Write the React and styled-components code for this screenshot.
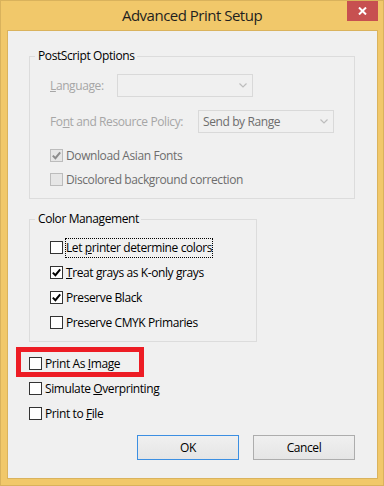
import React from 'react';
import styled, { createGlobalStyle } from 'styled-components';

const GlobalStyle = createGlobalStyle`
  html, body {
    margin: 0;
    padding: 0;
  }
  body {
    font-family: "Open Sans", "Noto Sans", sans-serif;
    font-size: 12px;
    letter-spacing: -0.4px;
    background: #f1c86a;
  }
`;

const Window = styled.div`
  width: 384px;
  height: 486px;
  box-sizing: border-box;
  background: #f1c86a;
  border: 1px solid #d9b25c;
  display: flex;
  flex-direction: column;
`;

const TitleBar = styled.div`
  height: 29px;
  display: grid;
  grid-template-columns: 1fr auto 1fr;
`;

const Title = styled.div`
  grid-column: 2;
  font-size: 15px;
  letter-spacing: -0.5px;
  line-height: 29px;
  color: #1f1f1f;
`;

const CloseButton = styled.div`
  grid-column: 3;
  justify-self: end;
  width: 31px;
  height: 20px;
  margin-right: 5px;
  background: #c75050;
  display: flex;
  align-items: center;
  justify-content: center;
`;

const Client = styled.div`
  flex: 1;
  margin: 0 5px 6px 6px;
  border: 1px solid #dab35d;
  background: #f0f0f0;
  padding: 17px 0 0 21px;
  display: flex;
  flex-direction: column;
  align-items: flex-start;
`;

const Group = styled.fieldset`
  box-sizing: border-box;
  width: ${({ $width }) => $width}px;
  margin: ${({ $top }) => $top || 0}px 0 0 0;
  padding: ${({ $padTop }) => $padTop}px 20px 10px 20px;
  border: 1px solid #dcdcdc;
  min-width: 0;
  display: flex;
  flex-direction: column;
  gap: ${({ $gap }) => $gap}px;
`;

const Legend = styled.legend`
  margin-left: -15px;
  padding: 0 2px 0 3px;
  line-height: 16px;
  color: #000;
`;

const FieldRow = styled.div`
  display: flex;
  align-items: center;
  height: 23px;
  margin-bottom: ${({ $after }) => $after || 0}px;
`;

const FieldLabel = styled.span`
  width: ${({ $width }) => $width}px;
  color: #a6a6a6;
  line-height: 16px;
`;

const Select = styled.div`
  box-sizing: border-box;
  width: 136px;
  height: 23px;
  border: 1px solid #d9d9d9;
  background: #f0f0f0;
  display: flex;
  align-items: center;
  padding: 0 5px 0 4px;
  color: #6d6d6d;
`;

const SelectValue = styled.span`
  flex: 1;
  line-height: 16px;
`;

const CheckRow = styled.div`
  position: relative;
  display: flex;
  align-items: center;
  height: 17px;

  ${({ $highlight }) =>
    $highlight &&
    `
    &::after {
      content: '';
      position: absolute;
      left: -13px;
      top: -8px;
      width: 128px;
      height: 30px;
      box-sizing: border-box;
      border: 5px solid #ed1c24;
    }
  `}
`;

const Box = styled.span`
  box-sizing: border-box;
  width: 13px;
  height: 13px;
  margin-right: 2px;
  border: 1px solid ${({ $disabled }) => ($disabled ? '#bcbcbc' : '#333333')};
  background: ${({ $disabled }) => ($disabled ? '#e6e6e6' : '#ffffff')};
  display: flex;
  align-items: center;
  justify-content: center;
`;

const CheckText = styled.span`
  line-height: 16px;
  padding: 1px 0;
  border: 1px dotted ${({ $focused }) => ($focused ? '#000' : 'transparent')};
  color: ${({ $disabled }) => ($disabled ? '#6d6d6d' : '#000')};
`;

const Key = styled.span`
  text-decoration: underline;
  text-underline-offset: 1px;
`;

const Checks = styled.div`
  margin-top: 13px;
  display: flex;
  flex-direction: column;
  gap: 8px;
`;

const Buttons = styled.div`
  width: 326px;
  margin-top: 13px;
  display: flex;
  justify-content: flex-end;
  gap: 14px;
`;

const Button = styled.div`
  box-sizing: border-box;
  width: 102px;
  height: 25px;
  border: 1px solid ${({ $default }) => ($default ? '#3c8fe2' : '#adadad')};
  background: linear-gradient(#f0f0f0, #e5e5e5);
  display: flex;
  align-items: center;
  justify-content: center;
  color: #000;
  line-height: 16px;
`;

const Chevron = () => (
  <svg width="8" height="5" viewBox="0 0 8 5">
    <polyline points="0.5,0.5 4,4 7.5,0.5" fill="none" stroke="#bdbdbd" strokeWidth="1.2" />
  </svg>
);

const Checkbox = ({ checked, disabled, focused, highlight, children }) => (
  <CheckRow $highlight={highlight}>
    <Box $disabled={disabled}>
      {checked && (
        <svg width="9" height="9" viewBox="0 0 9 9">
          <path
            d="M0.8 4.6 L3.4 7.2 L8.2 1.4"
            fill="none"
            stroke={disabled ? '#8c8c8c' : '#000'}
            strokeWidth="2"
          />
        </svg>
      )}
    </Box>
    <CheckText $disabled={disabled} $focused={focused}>
      {children}
    </CheckText>
  </CheckRow>
);

export default function App() {
  return (
    <>
      <GlobalStyle />
      <Window>
        <TitleBar>
          <Title>Advanced Print Setup</Title>
          <CloseButton>
            <svg width="9" height="8" viewBox="0 0 9 8">
              <path d="M1 0.5 L8 7.5 M8 0.5 L1 7.5" stroke="#fff" strokeWidth="2" />
            </svg>
          </CloseButton>
        </TitleBar>
        <Client>
          <Group $width={326} $padTop={10} $gap={7}>
            <Legend>PostScript Options</Legend>
            <FieldRow $after={6}>
              <FieldLabel $width={67}>
                <Key>L</Key>anguage:
              </FieldLabel>
              <Select>
                <SelectValue />
                <Chevron />
              </Select>
            </FieldRow>
            <FieldRow $after={7}>
              <FieldLabel $width={148}>
                Fo<Key>n</Key>t and Resource Policy:
              </FieldLabel>
              <Select>
                <SelectValue>Send by Range</SelectValue>
                <Chevron />
              </Select>
            </FieldRow>
            <Checkbox checked disabled>Download Asian Fonts</Checkbox>
            <Checkbox disabled>Discolored background correction</Checkbox>
          </Group>

          <Group $width={228} $top={12} $padTop={12} $gap={8}>
            <Legend>Color Management</Legend>
            <Checkbox focused>
              Let <Key>p</Key>rinter determine colors
            </Checkbox>
            <Checkbox checked>
              <Key>T</Key>reat grays as K-only grays
            </Checkbox>
            <Checkbox checked>Preserve Black</Checkbox>
            <Checkbox>Preserve CMYK Primaries</Checkbox>
          </Group>

          <Checks>
            <Checkbox highlight>
              Print As <Key>I</Key>mage
            </Checkbox>
            <Checkbox>
              Simulate <Key>O</Key>verprinting
            </Checkbox>
            <Checkbox>
              Print to <Key>F</Key>ile
            </Checkbox>
          </Checks>

          <Buttons>
            <Button $default>OK</Button>
            <Button>Cancel</Button>
          </Buttons>
        </Client>
      </Window>
    </>
  );
}
